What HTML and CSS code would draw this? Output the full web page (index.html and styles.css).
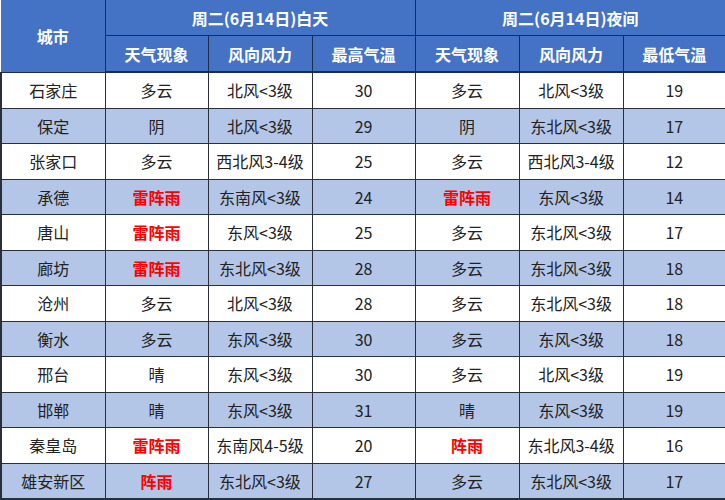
FILE: index.html
```html
<!DOCTYPE html>
<html lang="zh">
<head>
<meta charset="utf-8">
<link rel="stylesheet" href="styles.css">
</head>
<body>
<table class="wx">
<colgroup>
<col class="c1"><col class="c2"><col class="c3"><col class="c4"><col class="c5"><col class="c6"><col class="c7">
</colgroup>
<thead>
<tr class="h1"><th rowspan="2" class="city-h">城市</th><th colspan="3">周二(6月14日)白天</th><th colspan="3" class="last">周二(6月14日)夜间</th></tr>
<tr class="h2"><th>天气现象</th><th>风向风力</th><th>最高气温</th><th>天气现象</th><th>风向风力</th><th class="last">最低气温</th></tr>
</thead>
<tbody>
<tr><td>石家庄</td><td>多云</td><td>北风&lt;3级</td><td>30</td><td>多云</td><td>北风&lt;3级</td><td>19</td></tr>
<tr><td>保定</td><td>阴</td><td>北风&lt;3级</td><td>29</td><td>阴</td><td>东北风&lt;3级</td><td>17</td></tr>
<tr><td>张家口</td><td>多云</td><td>西北风3-4级</td><td>25</td><td>多云</td><td>西北风3-4级</td><td>12</td></tr>
<tr><td>承德</td><td class="red">雷阵雨</td><td>东南风&lt;3级</td><td>24</td><td class="red">雷阵雨</td><td>东风&lt;3级</td><td>14</td></tr>
<tr><td>唐山</td><td class="red">雷阵雨</td><td>东风&lt;3级</td><td>25</td><td>多云</td><td>东北风&lt;3级</td><td>17</td></tr>
<tr><td>廊坊</td><td class="red">雷阵雨</td><td>东北风&lt;3级</td><td>28</td><td>多云</td><td>东北风&lt;3级</td><td>18</td></tr>
<tr><td>沧州</td><td>多云</td><td>北风&lt;3级</td><td>28</td><td>多云</td><td>东北风&lt;3级</td><td>18</td></tr>
<tr><td>衡水</td><td>多云</td><td>东风&lt;3级</td><td>30</td><td>多云</td><td>东风&lt;3级</td><td>18</td></tr>
<tr><td>邢台</td><td>晴</td><td>东风&lt;3级</td><td>30</td><td>多云</td><td>北风&lt;3级</td><td>19</td></tr>
<tr><td>邯郸</td><td>晴</td><td>东风&lt;3级</td><td>31</td><td>晴</td><td>东风&lt;3级</td><td>19</td></tr>
<tr><td>秦皇岛</td><td class="red">雷阵雨</td><td>东南风4-5级</td><td>20</td><td class="red">阵雨</td><td>东北风3-4级</td><td>16</td></tr>
<tr><td>雄安新区</td><td class="red">阵雨</td><td>东北风&lt;3级</td><td>27</td><td>多云</td><td>东北风&lt;3级</td><td>17</td></tr>
</tbody>
</table>
</body>
</html>
```
FILE: styles.css
```css
html, body {
  margin: 0;
  padding: 0;
  background: #ffffff;
}
.wx {
  width: 725px;
  table-layout: fixed;
  border-collapse: collapse;
  font-family: "Noto Sans CJK SC", "Noto Sans", sans-serif;
  font-size: 16px;
  color: #222222;
}
.c1 { width: 104px; }
.c2 { width: 103px; }
.c3 { width: 104px; }
.c4 { width: 103px; }
.c5 { width: 104px; }
.c6 { width: 104px; }
.c7 { width: 103px; }
.wx th {
  background: #4472c4;
  color: #ffffff;
  font-weight: bold;
  height: 35px;
  padding: 0;
  border-left: 1px solid #1d2c4a;
  border-bottom: 1px solid #1d2c4a;
  text-align: center;
  line-height: 20px;
}
.wx th.city-h { border-left: none; }
.wx th.last { border-right: 2px solid #1d2c4a; }
.wx .h2 th { border-bottom: 2px solid #1d2c4a; }
.wx td {
  height: 34.5px;
  padding: 0;
  text-align: center;
  border-left: 1px solid #2a2f3a;
  border-bottom: 1px solid #2a2f3a;
  line-height: 20px;
}
.wx td:first-child { border-left: 2px solid #2a2f3a; }
.wx td:last-child { border-right: 2px solid #2a2f3a; }
.wx tbody tr:nth-child(even) td { background: #b4c6e7; }
.wx tbody tr:last-child td { border-bottom: 2px solid #2a2f3a; }
.wx td.red {
  color: #ff0000;
  font-weight: bold;
}
```
